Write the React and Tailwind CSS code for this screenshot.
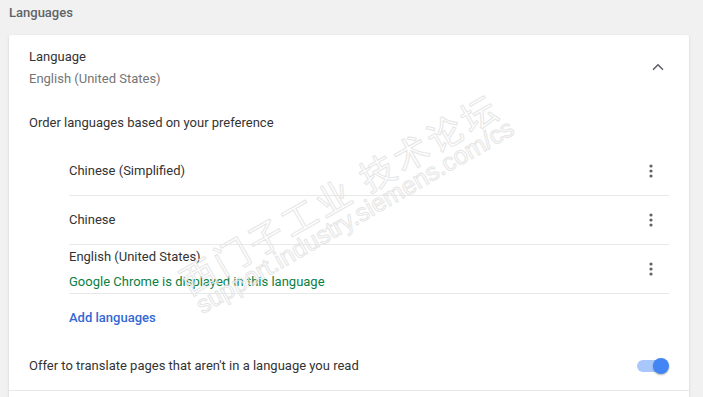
import { ChevronUp } from "lucide-react";

const langs = [
  { name: "Chinese (Simplified)" },
  { name: "Chinese" },
  { name: "English (United States)", note: "Google Chrome is displayed in this language" },
];

const MoreIcon = () => (
  <svg width="4" height="14" viewBox="0 0 4 14" className="fill-[#5f6368]">
    <circle cx="2" cy="2" r="1.6" />
    <circle cx="2" cy="7" r="1.6" />
    <circle cx="2" cy="12" r="1.6" />
  </svg>
);

const App = () => {
  return (
    <div className="relative h-[397px] w-[703px] overflow-hidden bg-[#f1f1f1] font-['Roboto','Liberation_Sans',sans-serif] text-[13px] text-[#333]">
      {/* Section title */}
      <div className="flex h-[35px] items-center pb-[10px] pl-[9px] pt-[1px] font-medium text-[#5f6368]">
        Languages
      </div>

      {/* Card */}
      <div className="ml-[9px] w-[680px] rounded-[2px] bg-white shadow-[0_1px_3px_rgba(0,0,0,0.12),0_1px_1px_rgba(0,0,0,0.08)]">
        {/* Language row */}
        <div className="flex h-[64px] items-center justify-between pl-[20px] pr-[22px]">
          <div className="flex flex-col gap-[3px] pt-[1px]">
            <span>Language</span>
            <span className="text-[#757575]">English (United States)</span>
          </div>
          <ChevronUp size={18} strokeWidth={2.2} className="text-[#5f6368]" />
        </div>

        {/* Order row */}
        <div className="flex h-[48px] items-center pl-[20px]">
          Order languages based on your preference
        </div>

        {/* Language list */}
        <div className="ml-[60px] mr-[20px]">
          {langs.map((l) => (
            <div
              key={l.name}
              className="flex h-[49px] items-center justify-between border-b border-[#e8e8e8]"
            >
              <div className="flex flex-col gap-[5px]">
                <span>{l.name}</span>
                {l.note && <span className="text-[#0b8043]">{l.note}</span>}
              </div>
              <div className="flex w-[36px] justify-center">
                <MoreIcon />
              </div>
            </div>
          ))}
          <div className="flex h-[48px] items-center font-medium text-[#3367d6]">
            Add languages
          </div>
        </div>

        {/* Translate row */}
        <div className="flex h-[49px] items-center justify-between border-b border-[#e8e8e8] pl-[20px] pr-[20px]">
          <span>Offer to translate pages that aren't in a language you read</span>
          <div className="relative flex h-[16px] w-[32px] items-center">
            <div className="h-[12px] w-[28px] rounded-full bg-[#a8c7fa]" />
            <div className="absolute right-0 top-0 h-[16px] w-[16px] rounded-full bg-[#4285f4] shadow-[0_1px_2px_rgba(0,0,0,0.3)]" />
          </div>
        </div>
        <div className="h-[20px]" />
      </div>

      {/* Watermark overlay */}
      <div className="pointer-events-none absolute left-[172px] top-[266px] origin-top-left -rotate-[30deg] select-none whitespace-nowrap">
        <div className="font-['Noto_Sans_CJK_SC',sans-serif] text-[35px] leading-[40px] tracking-[4px] text-transparent [-webkit-text-stroke:1px_#e6e6e6]">
          西门子工业 技术论坛
        </div>
        <div className="-mt-[6px] ml-[2px] font-['Liberation_Sans',sans-serif] text-[25px] leading-[28px] text-transparent [-webkit-text-stroke:1px_#e6e6e6]">
          support.industry.siemens.com/cs
        </div>
      </div>
    </div>
  );
};

export default App;
